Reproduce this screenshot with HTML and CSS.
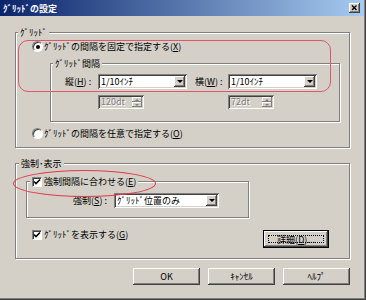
FILE: index.html
```html
<!DOCTYPE html>
<html lang="ja">
<head>
    <meta charset="UTF-8">
    <title>ｸﾞﾘｯﾄﾞの設定</title>
    <link rel="stylesheet" href="styles.css">
</head>
<body>
    <div class="window">
        <div class="titlebar">
            <span class="title">ｸﾞﾘｯﾄﾞの設定</span>
            <span class="close">
                <svg width="11" height="10" viewBox="0 0 11 10"><path d="M3 2.5 L7.5 7 M7.5 2.5 L3 7" stroke="#000" stroke-width="1.4"/></svg>
            </span>
        </div>
        <div class="content">
            <div class="group group-grid">
                <div class="legend">ｸﾞﾘｯﾄﾞ</div>
                <div class="option first"><span class="radio checked"></span>ｸﾞﾘｯﾄﾞの間隔を固定で指定する(<u>X</u>)</div>
                <div class="group inner">
                    <div class="legend">ｸﾞﾘｯﾄﾞ間隔</div>
                    <div class="field-row">
                        <span class="field-label">縦(<u>H</u>) :</span>
                        <span class="combo"><span class="combo-text">1/10ｲﾝﾁ</span><span class="drop"></span></span>
                        <span class="field-label second">横(<u>W</u>) :</span>
                        <span class="combo"><span class="combo-text">1/10ｲﾝﾁ</span><span class="drop"></span></span>
                    </div>
                    <div class="spin-row">
                        <span class="spin"><span class="spin-text">120dt</span><span class="spin-btns"><span class="up"></span><span class="down"></span></span></span>
                        <span class="spin"><span class="spin-text">72dt</span><span class="spin-btns"><span class="up"></span><span class="down"></span></span></span>
                    </div>
                </div>
                <div class="option second-radio"><span class="radio"></span>ｸﾞﾘｯﾄﾞの間隔を任意で指定する(<u>O</u>)</div>
            </div>

            <div class="group group-force">
                <div class="legend force-legend">強制･表示</div>
                <div class="group sub">
                    <div class="legend check-legend"><span class="check"><svg width="8" height="8" viewBox="0 0 8 8"><path d="M1 3.5 L3 5.5 L7 1.5" fill="none" stroke="#000" stroke-width="1.6"/></svg></span>強制間隔に合わせる(<u>E</u>)</div>
                    <div class="force-row">
                        <span class="force-label">強制(<u>S</u>) :</span>
                        <span class="combo wide"><span class="combo-text">ｸﾞﾘｯﾄﾞ位置のみ</span><span class="drop"></span></span>
                    </div>
                </div>
                <div class="show-row">
                    <div class="option"><span class="check"><svg width="8" height="8" viewBox="0 0 8 8"><path d="M1 3.5 L3 5.5 L7 1.5" fill="none" stroke="#000" stroke-width="1.6"/></svg></span>ｸﾞﾘｯﾄﾞを表示する(<u>G</u>)</div>
                    <button class="btn detail"><span class="focus">詳細(<u>D</u>)...</span></button>
                </div>
            </div>

            <div class="buttons">
                <button class="btn">OK</button>
                <button class="btn">ｷｬﾝｾﾙ</button>
                <button class="btn">ﾍﾙﾌﾟ</button>
            </div>
        </div>

        <!-- red marks drawn over the dialog -->
        <div class="mark-rect"></div>
        <div class="mark-ellipse"></div>
    </div>
</body>
</html>
```

FILE: styles.css
```css
* {
    box-sizing: border-box;
}
body {
    margin: 0;
    background: #fff;
    font-family: "Noto Sans CJK JP", "Noto Sans", sans-serif;
    font-size: 9px;
    line-height: 11px;
    color: #000;
}
u {
    text-decoration: underline;
}
.window {
    position: relative;
    width: 366px;
    height: 300px;
    background: #d4d0c8;
    box-shadow: inset -1px -1px #404040, inset -2px -2px #808080;
}
.titlebar {
    height: 16px;
    margin-right: 2px;
    padding: 0 4px 0 3px;
    display: flex;
    align-items: center;
    justify-content: space-between;
    background: linear-gradient(to right, #0a246a, #a6caf0);
}
.title {
    color: #fff;
    font-weight: bold;
}
.close {
    width: 11px;
    height: 10px;
    display: flex;
    background: #d4d0c8;
    box-shadow: inset -1px -1px #404040, inset 1px 1px #fff, inset -2px -2px #808080;
}
.content {
    padding: 16px 16px 0 15px;
}
.group {
    border: 1px solid #808080;
    box-shadow: inset 1px 1px #fff, 1px 1px #fff;
}
.legend {
    width: fit-content;
    height: 11px;
    margin: -6px 0 0 2px;
    padding: 0 2px;
    background: #d4d0c8;
    white-space: nowrap;
}
.group-grid {
    height: 116px;
}
.option {
    display: flex;
    align-items: center;
    height: 11px;
    white-space: nowrap;
}
.option.first {
    margin: 3px 0 0 16px;
}
.option.second-radio {
    margin: 6px 0 0 16px;
}
.radio {
    position: relative;
    width: 11px;
    height: 11px;
    margin-right: 1px;
    border-radius: 50%;
    background: #fff;
    border: 1px solid;
    border-color: #808080 #fff #fff #808080;
    box-shadow: inset 1px 1px #404040;
}
.radio.checked::after {
    content: "";
    position: absolute;
    left: 3px;
    top: 3px;
    width: 4px;
    height: 4px;
    border-radius: 50%;
    background: #000;
}
.check {
    width: 10px;
    height: 10px;
    margin-right: 2px;
    display: flex;
    align-items: center;
    justify-content: center;
    background: #fff;
    border: 1px solid;
    border-color: #808080 #fff #fff #808080;
    box-shadow: inset 1px 1px #404040;
}
.inner {
    width: 290px;
    height: 59px;
    margin: 11px 0 0 34px;
}
.field-row {
    display: flex;
    align-items: center;
    height: 15px;
    margin: 5px 0 0 14px;
}
.field-label {
    width: 33px;
    white-space: nowrap;
}
.field-label.second {
    margin-left: 8px;
}
.combo {
    width: 89px;
    height: 15px;
    display: flex;
    padding: 2px;
    background: #fff;
    box-shadow: inset 1px 1px #808080, inset -1px -1px #fff, inset 2px 2px #404040, inset -2px -2px #d4d0c8;
}
.combo.wide {
    width: 105px;
    height: 15px;
}
.combo-text {
    flex: 1;
    padding-left: 1px;
    display: flex;
    align-items: center;
    white-space: nowrap;
}
.drop {
    width: 11px;
    display: flex;
    align-items: center;
    justify-content: center;
    background: #d4d0c8;
    box-shadow: inset -1px -1px #404040, inset 1px 1px #fff, inset -2px -2px #808080;
}
.drop::after {
    content: "";
    border-top: 3px solid #000;
    border-left: 3px solid transparent;
    border-right: 3px solid transparent;
}
.spin-row {
    display: flex;
    gap: 84px;
    margin: 6px 0 0 47px;
}
.spin {
    width: 46px;
    height: 14px;
    display: flex;
    padding: 2px;
    background: #d4d0c8;
    box-shadow: inset 1px 1px #808080, inset -1px -1px #fff, inset 2px 2px #404040, inset -2px -2px #d4d0c8;
}
.spin-text {
    flex: 1;
    color: #808080;
    text-shadow: 1px 1px #fff;
    line-height: 10px;
    padding-left: 1px;
}
.spin-btns {
    width: 10px;
    display: flex;
    flex-direction: column;
}
.spin-btns span {
    flex: 1;
    display: flex;
    align-items: center;
    justify-content: center;
    box-shadow: inset -1px -1px #808080, inset 1px 1px #fff;
}
.spin-btns .up::after {
    content: "";
    border-bottom: 2px solid #808080;
    border-left: 2px solid transparent;
    border-right: 2px solid transparent;
}
.spin-btns .down::after {
    content: "";
    border-top: 2px solid #808080;
    border-left: 2px solid transparent;
    border-right: 2px solid transparent;
}
.group-force {
    height: 96px;
    margin-top: 15px;
}
.force-legend {
    margin-left: 3px;
}
.sub {
    width: 223px;
    height: 37px;
    margin: 12px 0 0 10px;
}
.check-legend {
    display: flex;
    align-items: center;
    margin-left: 3px;
}
.force-row {
    display: flex;
    align-items: center;
    height: 15px;
    margin: 6px 0 0 46px;
}
.force-label {
    width: 41px;
    white-space: nowrap;
}
.show-row {
    display: flex;
    align-items: flex-start;
    margin-top: 11px;
    padding: 0 20px 0 16px;
}
.btn {
    width: 67px;
    height: 17px;
    padding: 0;
    border: none;
    font: inherit;
    color: #000;
    background: #d4d0c8;
    box-shadow: inset -1px -1px #404040, inset 1px 1px #fff, inset -2px -2px #808080, inset 2px 2px #d4d0c8;
}
.btn.detail {
    width: 66px;
    height: 18px;
    margin: 1px 0 0 auto;
    padding: 4px;
    border: 1px solid #000;
    display: flex;
}
.focus {
    flex: 1;
    display: flex;
    align-items: center;
    justify-content: center;
    border: 1px dotted #000;
}
.buttons {
    display: flex;
    justify-content: flex-end;
    gap: 8px;
    margin-top: 9px;
}
.mark-rect {
    position: absolute;
    left: 18px;
    top: 40px;
    width: 313px;
    height: 52px;
    border: 1.5px solid #e0566a;
    border-radius: 10px;
}
.mark-ellipse {
    position: absolute;
    left: 13px;
    top: 170px;
    width: 143px;
    height: 27px;
    border: 1.5px solid #e23a4a;
    border-radius: 50%;
}
```
